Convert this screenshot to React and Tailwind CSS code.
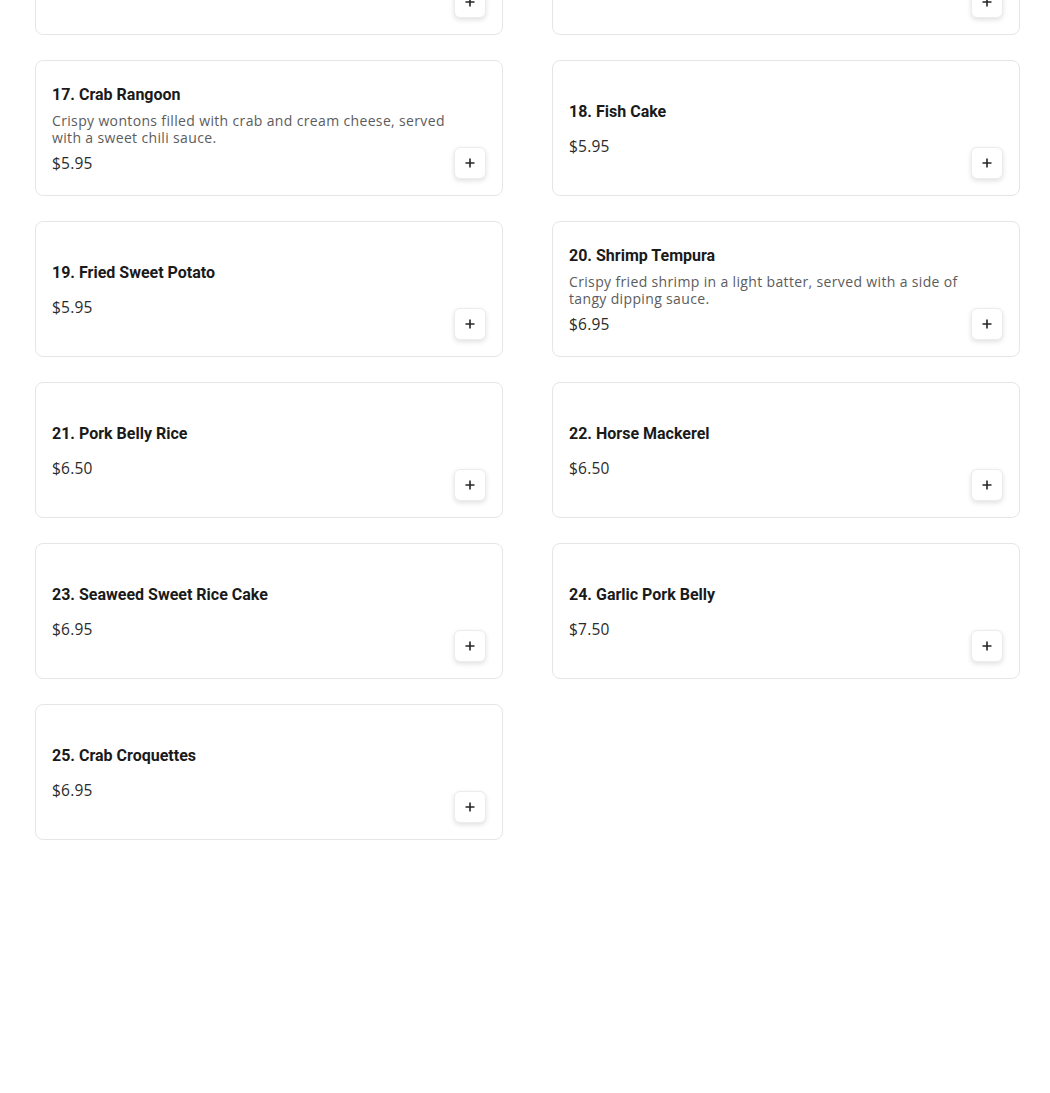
import React from "react";

const ITEMS = [
  { no: 15, name: "Pork Dumplings", price: "5.95" },
  { no: 16, name: "Spring Rolls", price: "5.95" },
  {
    no: 17,
    name: "Crab Rangoon",
    desc: "Crispy wontons filled with crab and cream cheese, served with a sweet chili sauce.",
    price: "5.95",
  },
  { no: 18, name: "Fish Cake", price: "5.95" },
  { no: 19, name: "Fried Sweet Potato", price: "5.95" },
  {
    no: 20,
    name: "Shrimp Tempura",
    desc: "Crispy fried shrimp in a light batter, served with a side of tangy dipping sauce.",
    price: "6.95",
  },
  { no: 21, name: "Pork Belly Rice", price: "6.50" },
  { no: 22, name: "Horse Mackerel", price: "6.50" },
  { no: 23, name: "Seaweed Sweet Rice Cake", price: "6.95" },
  { no: 24, name: "Garlic Pork Belly", price: "7.50" },
  { no: 25, name: "Crab Croquettes", price: "6.95" },
];

const PlusIcon = () => (
  <svg width="10" height="10" viewBox="0 0 10 10" fill="none">
    <path d="M5 0.5v9M0.5 5h9" stroke="#262626" strokeWidth="1.6" />
  </svg>
);

function MenuCard({ item }) {
  return (
    <div className="h-[136px] bg-white border border-[#e6e6e6] rounded-lg p-4 flex justify-between">
      <div className="flex-1 min-w-0 flex flex-col justify-center pt-px">
        <h3 className="text-[16px] leading-6 font-bold text-[#1a1a1a] font-['Roboto',sans-serif]">
          {item.no}. {item.name}
        </h3>
        <p className="my-[5px] text-[14px] tracking-[0.35px] leading-[17px] text-[#5c5c5c] font-['Open_Sans',sans-serif]">
          {item.desc}
        </p>
        <span className="text-[15.5px] leading-6 tracking-[0.2px] text-[#2b2b2b] font-['Open_Sans',sans-serif]">
          ${item.price}
        </span>
      </div>
      <button className="self-end shrink-0 w-8 h-8 flex items-center justify-center bg-white border border-[#ececec] rounded-md shadow-[0_2px_5px_rgba(0,0,0,0.12)]">
        <PlusIcon />
      </button>
    </div>
  );
}

export default function App() {
  return (
    <div className="min-h-[1093px] bg-white overflow-hidden">
      <div className="pl-[35px] pr-[30px] -mt-[101px] grid grid-cols-2 gap-x-[49px] gap-y-[25px]">
        {ITEMS.map((item) => (
          <MenuCard key={item.no} item={item} />
        ))}
      </div>
    </div>
  );
}
